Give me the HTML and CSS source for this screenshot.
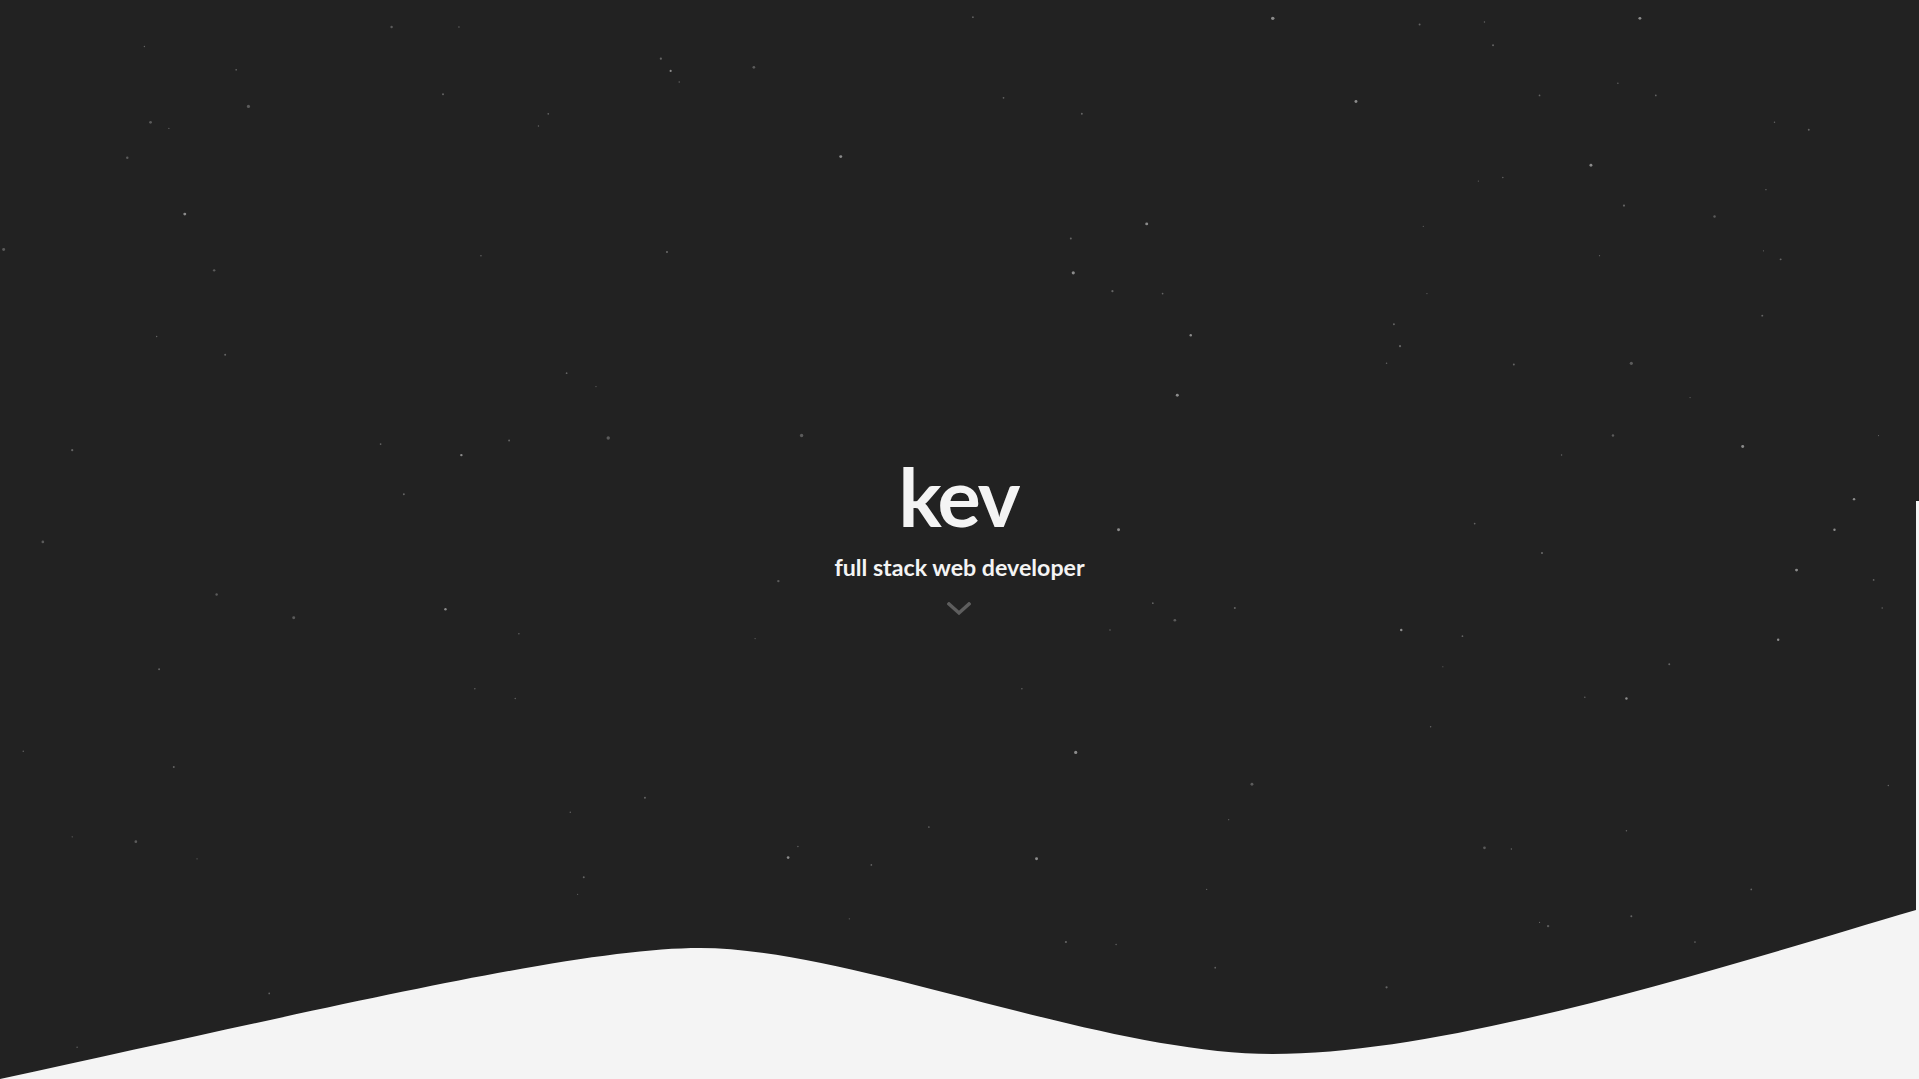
FILE: index.html
```html
<!DOCTYPE html>
<html lang="en">
<head>
<meta charset="utf-8">
<title>kev</title>
<link rel="stylesheet" href="styles.css">
</head>
<body>
<header class="hero">
  <svg class="sky" viewBox="0 0 1919 1079" preserveAspectRatio="none" aria-hidden="true">
    <g class="stars" transform="scale(1.2238 1.2234)">
      <circle cx="1040" cy="15" r="1.4" class="b"/><circle cx="1340" cy="15" r="1.2" class="b"/><circle cx="795" cy="14" r="0.7"/><circle cx="1160" cy="20" r="0.8"/><circle cx="1213" cy="18" r="0.6"/>
      <circle cx="320" cy="22" r="1" class="d"/><circle cx="375" cy="22" r="0.6"/><circle cx="1220" cy="37" r="0.8"/><circle cx="118" cy="38" r="0.6"/><circle cx="540" cy="48" r="0.9"/>
      <circle cx="548" cy="58" r="0.9" class="b"/><circle cx="616" cy="55" r="1.1" class="d"/><circle cx="555" cy="67" r="0.6"/><circle cx="193" cy="57" r="0.7"/><circle cx="1322" cy="68" r="0.6"/>
      <circle cx="1258" cy="78" r="0.7"/><circle cx="1353" cy="78" r="0.7"/><circle cx="1108" cy="83" r="1.2" class="b"/><circle cx="362" cy="77" r="0.8"/><circle cx="820" cy="80" r="0.7"/>
      <circle cx="203" cy="87" r="1.3" class="d"/><circle cx="448" cy="93" r="0.7"/><circle cx="884" cy="93" r="0.8"/><circle cx="1450" cy="100" r="0.6"/><circle cx="123" cy="100" r="1.1" class="d"/>
      <circle cx="138" cy="105" r="0.5"/><circle cx="1478" cy="106" r="0.8"/><circle cx="440" cy="103" r="0.6"/><circle cx="104" cy="129" r="1" class="d"/><circle cx="687" cy="128" r="1.2" class="b"/>
      <circle cx="1300" cy="135" r="1.2" class="b"/><circle cx="1228" cy="145" r="0.6"/><circle cx="1208" cy="148" r="0.5"/><circle cx="1443" cy="155" r="0.6"/><circle cx="1327" cy="168" r="0.9"/>
      <circle cx="151" cy="175" r="1.2" class="b"/><circle cx="1401" cy="177" r="1" class="d"/><circle cx="937" cy="183" r="1.2" class="b"/><circle cx="1163" cy="185" r="0.5"/><circle cx="875" cy="195" r="0.8"/>
      <circle cx="545" cy="206" r="0.9"/><circle cx="393" cy="209" r="0.6"/><circle cx="3" cy="204" r="1.2" class="d"/><circle cx="1455" cy="212" r="0.8"/><circle cx="1441" cy="205" r="0.5"/>
      <circle cx="1307" cy="209" r="0.5"/><circle cx="877" cy="223" r="1.3" class="b"/><circle cx="175" cy="221" r="1" class="d"/><circle cx="909" cy="238" r="0.9"/><circle cx="950" cy="240" r="0.7"/>
      <circle cx="1166" cy="240" r="0.5"/><circle cx="1139" cy="265" r="0.8"/><circle cx="1440" cy="258" r="0.8"/><circle cx="973" cy="274" r="1" class="b"/><circle cx="128" cy="275" r="0.6"/>
      <circle cx="1144" cy="283" r="0.9"/><circle cx="184" cy="290" r="0.8"/><circle cx="1333" cy="297" r="1.3" class="d"/><circle cx="1237" cy="298" r="0.8"/><circle cx="1133" cy="297" r="0.6"/>
      <circle cx="463" cy="305" r="0.7"/><circle cx="487" cy="316" r="0.5"/><circle cx="962" cy="323" r="1.2" class="b"/><circle cx="1381" cy="325" r="0.5"/><circle cx="497" cy="358" r="1.4" class="d"/>
      <circle cx="655" cy="356" r="1.4" class="d"/><circle cx="1318" cy="356" r="1" class="d"/><circle cx="416" cy="360" r="0.8"/><circle cx="311" cy="363" r="0.7"/><circle cx="1424" cy="365" r="1.2" class="b"/>
      <circle cx="377" cy="372" r="1" class="b"/><circle cx="59" cy="368" r="0.9"/><circle cx="1535" cy="356" r="0.5"/><circle cx="1276" cy="372" r="0.6"/><circle cx="330" cy="404" r="0.8"/>
      <circle cx="1515" cy="408" r="1" class="b"/><circle cx="914" cy="433" r="1.2" class="b"/><circle cx="1205" cy="428" r="0.7"/><circle cx="35" cy="443" r="1.1" class="d"/><circle cx="1499" cy="433" r="1" class="b"/>
      <circle cx="1260" cy="452" r="0.9"/><circle cx="1468" cy="466" r="1.2" class="b"/><circle cx="636" cy="475" r="1" class="d"/><circle cx="177" cy="486" r="1" class="d"/><circle cx="1531" cy="474" r="0.7"/>
      <circle cx="942" cy="493" r="0.7"/><circle cx="1009" cy="497" r="0.8"/><circle cx="1538" cy="497" r="0.6"/><circle cx="364" cy="498" r="1" class="b"/><circle cx="240" cy="505" r="1.2" class="d"/>
      <circle cx="960" cy="507" r="1.1" class="d"/><circle cx="1145" cy="515" r="1" class="b"/><circle cx="1195" cy="520" r="0.7"/><circle cx="1453" cy="523" r="1" class="b"/><circle cx="424" cy="518" r="0.6"/>
      <circle cx="907" cy="515" r="0.6"/><circle cx="617" cy="522" r="0.5"/><circle cx="130" cy="547" r="0.8"/><circle cx="1364" cy="543" r="0.8"/><circle cx="1179" cy="545" r="0.5"/>
      <circle cx="388" cy="563" r="0.6"/><circle cx="835" cy="563" r="0.6"/><circle cx="421" cy="571" r="0.6"/><circle cx="1329" cy="571" r="1" class="b"/><circle cx="1295" cy="570" r="0.6"/>
      <circle cx="1169" cy="594" r="0.6"/><circle cx="19" cy="614" r="0.6"/><circle cx="879" cy="615" r="1.3" class="b"/><circle cx="142" cy="627" r="0.8"/><circle cx="1023" cy="641" r="1.2" class="d"/>
      <circle cx="1543" cy="642" r="0.6"/><circle cx="527" cy="652" r="0.8"/><circle cx="466" cy="664" r="0.6"/><circle cx="1004" cy="670" r="0.5"/><circle cx="759" cy="676" r="0.7"/>
      <circle cx="1329" cy="679" r="0.6"/><circle cx="59" cy="684" r="0.5"/><circle cx="111" cy="688" r="1.1" class="d"/><circle cx="1213" cy="693" r="1.1" class="d"/><circle cx="1235" cy="694" r="0.6"/>
      <circle cx="652" cy="692" r="0.6"/><circle cx="644" cy="701" r="1.1" class="b"/><circle cx="847" cy="702" r="1.2" class="b"/><circle cx="712" cy="707" r="0.7"/><circle cx="161" cy="702" r="0.5"/>
      <circle cx="477" cy="717" r="0.8"/><circle cx="1431" cy="727" r="0.7"/><circle cx="986" cy="727" r="0.5"/><circle cx="472" cy="731" r="0.5"/><circle cx="1333" cy="749" r="0.8"/>
      <circle cx="694" cy="751" r="0.5"/><circle cx="1258" cy="754" r="0.5"/><circle cx="1265" cy="757" r="1" class="d"/><circle cx="1385" cy="770" r="0.7"/><circle cx="871" cy="770" r="0.9"/>
      <circle cx="912" cy="772" r="0.6"/><circle cx="993" cy="791" r="0.7"/><circle cx="1133" cy="807" r="0.9"/><circle cx="220" cy="812" r="0.7"/><circle cx="63" cy="856" r="0.6"/>
    </g>
    <path class="ground" d="M0,1079 C350,1003 580,948 700,948 C850,948 1100,1054 1273,1054 C1450,1054 1716,969 1916,910 L1916,501 L1919,501 L1919,1079 Z"/>
  </svg>
  <div class="intro">
    <h1 class="name">kev</h1>
    <p class="role">full stack web developer</p>
    <svg class="chevron" viewBox="0 0 24 14" aria-hidden="true">
      <path d="M2 2 L12 11 L22 2"/>
    </svg>
  </div>
</header>
</body>
</html>
```

FILE: styles.css
```css
html, body {
  margin: 0;
  padding: 0;
  height: 100%;
  overflow: hidden;
}

body {
  background: #f4f4f4;
  font-family: "Lato", "Noto Sans", sans-serif;
}

.hero {
  position: relative;
  height: 100vh;
  background: #222222;
  display: flex;
  align-items: center;
  justify-content: center;
  padding-bottom: 8px;
  box-sizing: border-box;
}

.sky {
  position: absolute;
  inset: 0;
  width: 100%;
  height: 100%;
  display: block;
}

.stars circle {
  fill: #ffffff;
  opacity: 0.3;
}

.stars circle.b {
  opacity: 0.48;
}

.stars circle.d {
  opacity: 0.26;
}

.ground {
  fill: #f4f4f4;
}

.intro {
  position: relative;
  display: flex;
  flex-direction: column;
  align-items: center;
  color: #f4f4f4;
}

.name {
  margin: 0 0 0 -2px;
  font-size: 81px;
  line-height: 1;
  font-weight: 700;
  letter-spacing: -2px;
}

.role {
  margin: 20px 0 0;
  font-size: 23.2px;
  line-height: 1;
  font-weight: 700;
  letter-spacing: 0;
}

.chevron {
  width: 24px;
  height: 14px;
  margin-top: 23px;
  display: block;
}

.chevron path {
  fill: none;
  stroke: #5e5e5e;
  stroke-width: 3.5;
  stroke-linecap: square;
}
```
